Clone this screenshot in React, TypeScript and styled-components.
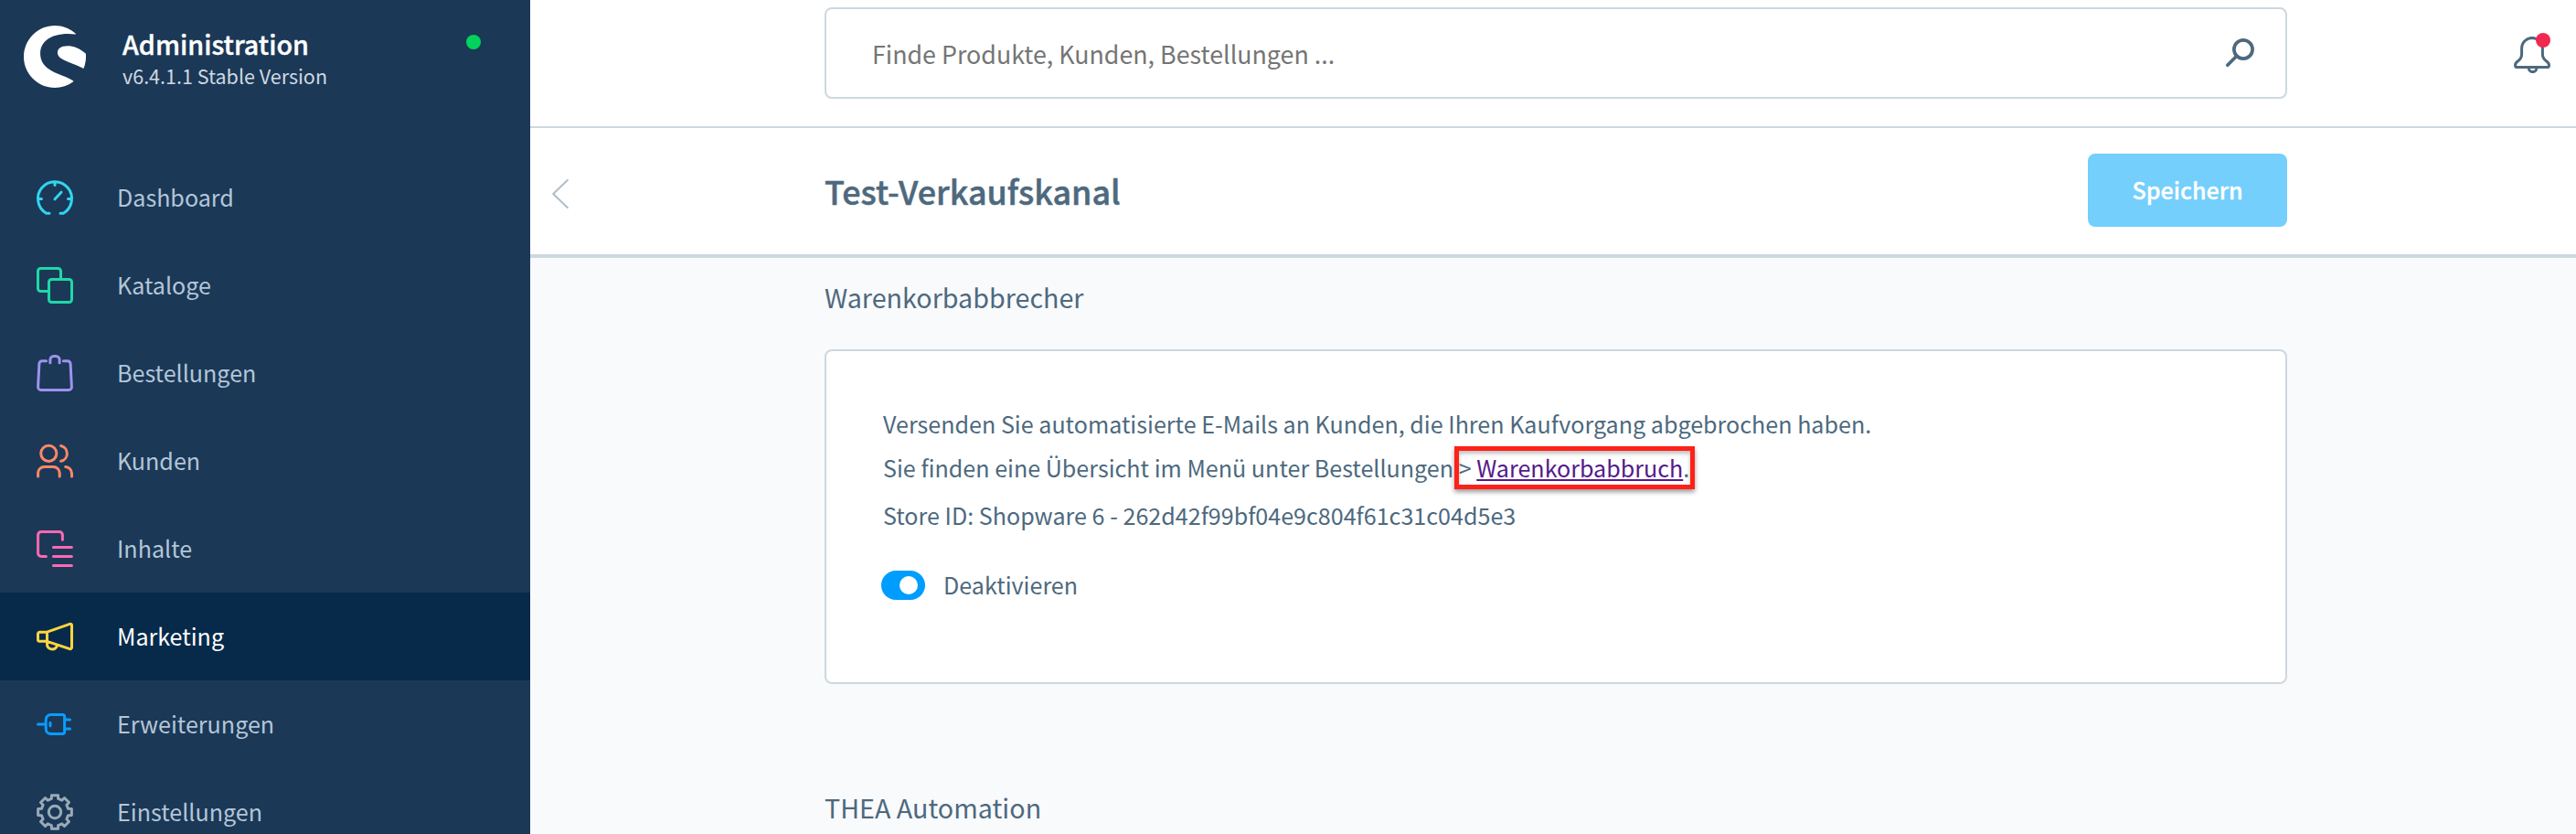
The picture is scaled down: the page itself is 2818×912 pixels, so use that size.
import React from "react";
import styled, { createGlobalStyle } from "styled-components";
import { SiShopware } from "react-icons/si";

const GlobalStyle = createGlobalStyle`
  *, *::after {
    box-sizing: border-box;
  }
  body {
    margin: 0;
    font-family: "Noto Sans CJK SC", "Noto Sans", sans-serif;
    color: #4d697e;
    overflow: hidden;
  }
`;

const Page = styled.div`
  display: flex;
  width: 100%;
  height: 912px;
  overflow: hidden;
`;

/* ---------- sidebar ---------- */

const Sidebar = styled.aside`
  flex: 0 0 580px;
  background: #1b3857;
`;

const Brand = styled.div`
  display: flex;
  align-items: flex-start;
  height: 168px;
  padding: 28px 54px 0 26px;
  color: #fff;
`;

const BrandText = styled.div`
  flex: 1;
  margin-left: 40px;
`;

const BrandName = styled.div`
  margin-top: 2px;
  font-size: 28.7px;
  line-height: 36px;
  font-weight: 500;
  -webkit-text-stroke: 0.4px #fff;
`;

const BrandVersion = styled.div`
  margin-top: 3px;
  font-size: 21.5px;
  line-height: 28px;
  color: #cfd9e1;
`;

const StatusDot = styled.span`
  width: 16px;
  height: 16px;
  margin-top: 10px;
  border-radius: 50%;
  background: #00d35b;
`;

interface NavProps {
  $active?: boolean;
}

const NavRow = styled.div<NavProps>`
  display: flex;
  align-items: center;
  height: 96px;
  padding-left: 40px;
  background: ${(p) => (p.$active ? "#072a4b" : "transparent")};
  color: ${(p) => (p.$active ? "#fff" : "#b3c6d8")};
`;

const NavLabel = styled.span`
  margin-left: 48px;
  padding-bottom: 3px;
  font-size: 25.1px;
  line-height: 40px;
`;

const NavIcon = styled.svg`
  width: 40px;
  height: 40px;
  fill: none;
  stroke-width: 3;
  stroke-linecap: round;
  stroke-linejoin: round;
  overflow: visible;
`;

/* ---------- main area ---------- */

const Main = styled.main`
  flex: 1;
  display: flex;
  flex-direction: column;
  background: #f9fafc;
`;

const Bar = styled.header<{ $line: number }>`
  flex-shrink: 0;
  display: grid;
  grid-template-columns: 322px 1600px 1fr;
  height: ${(p) => 138 + p.$line}px;
  border-bottom: ${(p) => p.$line}px solid #cdd8df;
  background: #fff;
`;

const SearchBox = styled.div`
  grid-column: 2;
  display: flex;
  align-items: center;
  justify-content: space-between;
  height: 100px;
  margin-top: 8px;
  padding: 0 34px 0 50px;
  border: 2px solid #cdd8df;
  border-radius: 8px;
  font-size: 26.8px;
  color: #757575;
`;

const ToolIcon = styled.svg<{ $color?: string }>`
  fill: none;
  stroke: ${(p) => p.$color || "#4d697e"};
  stroke-linecap: round;
  stroke-linejoin: round;
`;

const Notifications = styled.div`
  position: relative;
  justify-self: end;
  width: 40px;
  height: 40px;
  margin: 40px 28px 0 0;
`;

const Badge = styled.span`
  position: absolute;
  top: -4px;
  right: 0;
  width: 16px;
  height: 16px;
  border-radius: 50%;
  background: #f1284f;
`;

const BackButton = styled.div`
  display: flex;
  align-items: center;
  padding: 6px 0 0 24px;
`;

const HeadContent = styled.div`
  display: flex;
  align-items: center;
  justify-content: space-between;
  padding-bottom: 2px;
`;

const PageTitle = styled.h1`
  margin: 0;
  font-size: 35.9px;
  line-height: 48px;
  font-weight: 500;
  -webkit-text-stroke: 0.5px #4d697e;
`;

const SaveButton = styled.button`
  width: 218px;
  height: 80px;
  padding: 0 0 2px;
  border: 0;
  border-radius: 8px;
  background: #74cffc;
  color: #fff;
  font-family: inherit;
  font-size: 25.1px;
  font-weight: 500;
  -webkit-text-stroke: 0.3px #fff;
`;

const Content = styled.div`
  width: 1600px;
  margin-left: 322px;
  padding-top: 23px;
`;

const SectionTitle = styled.h2`
  margin: 0 0 37px;
  font-size: 28.7px;
  line-height: 40px;
  font-weight: 400;
`;

const Card = styled.section`
  height: 366px;
  margin-bottom: 115px;
  padding: 55px 62px 0;
  border: 2px solid #cdd8df;
  border-radius: 8px;
  background: #fff;
`;

const Paragraph = styled.p`
  margin: 0 0 4px;
  font-size: 25.1px;
  line-height: 48px;
`;

// link target framed in red, drawn over the text line
const Marked = styled.span`
  position: relative;

  &::after {
    content: "";
    position: absolute;
    top: -5px;
    left: -5px;
    right: -6px;
    height: 47px;
    border: 5px solid #ff2117;
    box-shadow: 0 3px 5px rgba(0, 0, 0, 0.4), inset 0 3px 4px rgba(0, 0, 0, 0.25);
  }
`;

const VisitedLink = styled.a`
  color: #551a8b;
  text-decoration: underline;
  text-decoration-thickness: 2px;
  text-underline-offset: 2px;
  text-decoration-skip-ink: none;
`;

const SwitchRow = styled.label`
  display: flex;
  align-items: center;
  height: 32px;
  margin: 37px 0 0 -2px;
  font-size: 25.1px;
`;

const Switch = styled.span`
  display: flex;
  align-items: center;
  justify-content: flex-end;
  width: 48px;
  height: 32px;
  margin-right: 20px;
  padding-right: 8px;
  border-radius: 16px;
  background: #009dff;
`;

const Knob = styled.span`
  width: 20px;
  height: 20px;
  border-radius: 50%;
  background: #fff;
`;

const SwitchLabel = styled.span`
  padding-bottom: 2px;
`;

// outline of the cog: eight teeth around the 40px icon centre
const cogPath = () => {
  const points: string[] = [];
  for (let i = 0; i < 8; i++) {
    const mid = i * 45 - 90;
    [
      [-14, 15],
      [-11, 18.7],
      [11, 18.7],
      [14, 15],
    ].forEach(([offset, r]) => {
      const a = ((mid + offset) * Math.PI) / 180;
      points.push(`${(20 + r * Math.cos(a)).toFixed(2)} ${(20 + r * Math.sin(a)).toFixed(2)}`);
    });
  }
  return `M${points.join("L")}Z`;
};

interface NavItem {
  label: string;
  color: string;
  icon: React.ReactNode;
  active?: boolean;
}

const navItems: NavItem[] = [
  {
    label: "Dashboard",
    color: "#2fd6ee",
    icon: (
      <path d="M14 37.2H10.7A18.5 18.5 0 1 1 29.3 37.2H26M20 3v3.5M1.5 21.5h4M38.5 21.5h-4M20 21.8l7-7.6" />
    ),
  },
  {
    label: "Kataloge",
    color: "#1fd8a6",
    icon: (
      <>
        <path d="M13 26.5H4.5a3 3 0 0 1-3-3v-19a3 3 0 0 1 3-3h19a3 3 0 0 1 3 3V13" />
        <rect x="13.5" y="13.5" width="25" height="25" rx="3" />
      </>
    ),
  },
  {
    label: "Bestellungen",
    color: "#9e92ee",
    icon: (
      <path d="M10.6 6.7H6.1a3.2 3.2 0 0 0-3.2 3.1L1.6 35.2a3.2 3.2 0 0 0 3.2 3.3h30.4a3.2 3.2 0 0 0 3.2-3.3L37.1 9.8a3.2 3.2 0 0 0-3.2-3.1H29.4M14.9 8.7V5.5a4 4 0 0 1 4-4h2.2a4 4 0 0 1 4 4v3.2" />
    ),
  },
  {
    label: "Kunden",
    color: "#ff8866",
    icon: (
      <>
        <circle cx="13.3" cy="11.8" r="8.6" />
        <path d="M1.6 37.1v-3.8a6.8 6.8 0 0 1 6.8-6.8h10a6.8 6.8 0 0 1 6.8 6.8v3.8M26.6 3.5a8.6 8.6 0 0 1 0 16.8M31.7 26.5a7.2 7.2 0 0 1 6.8 7.2v3.4" />
      </>
    ),
  },
  {
    label: "Inhalte",
    color: "#ff68b3",
    icon: (
      <path d="M10.4 28.4H5.1a3.5 3.5 0 0 1-3.5-3.5V5.1a3.5 3.5 0 0 1 3.5-3.5h19.8a3.5 3.5 0 0 1 3.5 3.5v5.1M18.4 18.4h20M18.4 28.4h20M18.4 38.4h20" />
    ),
  },
  {
    label: "Marketing",
    color: "#ffd53f",
    active: true,
    icon: (
      <path d="M11.5 15.3H3.5a2 2 0 0 0-2 2v6a2 2 0 0 0 2 2h8M11.5 15.2v10.2l24.9 8.2a1.6 1.6 0 0 0 2.1-1.5V7.8a1.6 1.6 0 0 0-2.1-1.5ZM11.5 25.4v2.8a5.7 5.7 0 0 0 10.3 3.4l.6-1.6" />
    ),
  },
  {
    label: "Erweiterungen",
    color: "#0a9cff",
    icon: (
      <path d="M1.5 20h7.3M15.6 9.6h12.8a2.2 2.2 0 0 1 2.2 2.2v16.4a2.2 2.2 0 0 1-2.2 2.2H15.6a5.4 5.4 0 0 1-5.4-5.4V15a5.4 5.4 0 0 1 5.4-5.4ZM15 18.3v3.4M31 14.9h5.5M31 25.1h5.5" />
    ),
  },
  {
    label: "Einstellungen",
    color: "#99aab7",
    icon: (
      <>
        <path d={cogPath()} />
        <circle cx="20" cy="20" r="6.7" />
      </>
    ),
  },
];

const SidebarMenu: React.FC = () => (
  <Sidebar>
    <Brand>
      <SiShopware size={68} />
      <BrandText>
        <BrandName>Administration</BrandName>
        <BrandVersion>v6.4.1.1 Stable Version</BrandVersion>
      </BrandText>
      <StatusDot />
    </Brand>
    {navItems.map((item) => (
      <NavRow key={item.label} $active={item.active}>
        <NavIcon viewBox="0 0 40 40" stroke={item.color}>
          {item.icon}
        </NavIcon>
        <NavLabel>{item.label}</NavLabel>
      </NavRow>
    ))}
  </Sidebar>
);

const App: React.FC = () => (
  <>
    <GlobalStyle />
    <Page>
      <SidebarMenu />
      <Main>
        <Bar $line={2}>
          <SearchBox>
            <span>Finde Produkte, Kunden, Bestellungen ...</span>
            <ToolIcon width="32" height="32" viewBox="0 0 32 32" strokeWidth="3.7">
              <circle cx="20" cy="12" r="10.1" />
              <path d="M12.5 19.5L2.8 29.2" />
            </ToolIcon>
          </SearchBox>
          <Notifications>
            <ToolIcon width="40" height="40" viewBox="0 0 40 40" strokeWidth="3">
              <path d="M8.6 12.8a11.4 11.4 0 0 1 22.8 0v6.4c0 3.4 1.4 5.6 4.1 7.6 2 1.4 3 2.8 3 4.6 0 1.3-.8 2.1-2.1 2.1H3.6c-1.3 0-2.1-.8-2.1-2.1 0-1.8 1-3.2 3-4.6 2.7-2 4.1-4.2 4.1-7.6Z" />
              <path d="M16.4 34.4a4.2 4.2 0 0 0 8.4 0" />
            </ToolIcon>
            <Badge />
          </Notifications>
        </Bar>
        <Bar $line={4}>
          <BackButton>
            <ToolIcon $color="#b0bec7" width="18" height="32" viewBox="0 0 18 32" strokeWidth="2">
              <path d="M16.8 1L1.2 16l15.6 15" />
            </ToolIcon>
          </BackButton>
          <HeadContent>
            <PageTitle>Test-Verkaufskanal</PageTitle>
            <SaveButton>Speichern</SaveButton>
          </HeadContent>
        </Bar>
        <Content>
          <SectionTitle>Warenkorbabbrecher</SectionTitle>
          <Card>
            <Paragraph>
              Versenden Sie automatisierte E-Mails an Kunden, die Ihren Kaufvorgang abgebrochen haben.
              <br />
              Sie finden eine Übersicht im Menü unter Bestellungen{" "}
              <Marked>
                &gt; <VisitedLink>Warenkorbabbruch</VisitedLink>.
              </Marked>
            </Paragraph>
            <Paragraph>Store ID: Shopware 6 - 262d42f99bf04e9c804f61c31c04d5e3</Paragraph>
            <SwitchRow>
              <Switch>
                <Knob />
              </Switch>
              <SwitchLabel>Deaktivieren</SwitchLabel>
            </SwitchRow>
          </Card>
          <SectionTitle>THEA Automation</SectionTitle>
        </Content>
      </Main>
    </Page>
  </>
);

export default App;
